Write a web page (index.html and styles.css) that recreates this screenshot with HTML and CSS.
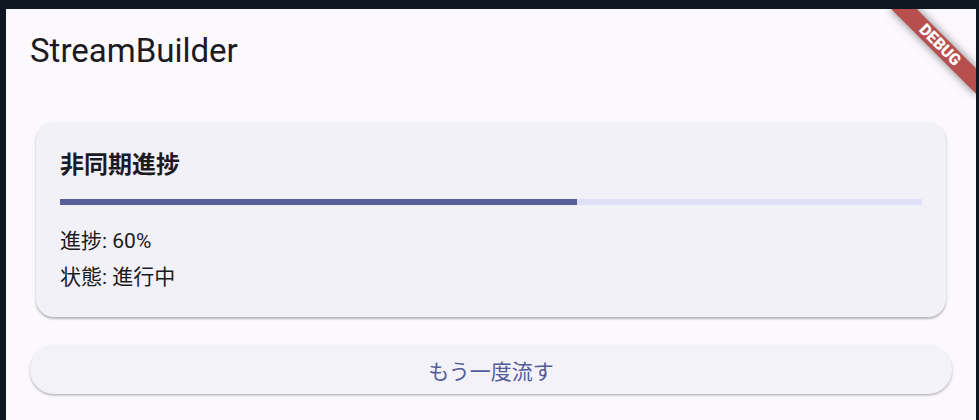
FILE: index.html
```html
<!DOCTYPE html>
<html lang="ja">
<head>
<meta charset="utf-8">
<title>StreamBuilder</title>
<link rel="stylesheet" href="styles.css">
</head>
<body>
<div class="window">
  <header class="app-bar">
    <h1 class="app-title">StreamBuilder</h1>
  </header>
  <main class="content">
    <section class="card">
      <h2 class="card-title">非同期進捗</h2>
      <div class="progress" role="progressbar" aria-valuenow="60" aria-valuemin="0" aria-valuemax="100">
        <div class="progress-fill" style="width: 60%"></div>
      </div>
      <div class="status">
        <p class="status-line">進捗: 60%</p>
        <p class="status-line">状態: 進行中</p>
      </div>
    </section>
    <button class="replay-button" type="button">もう一度流す</button>
  </main>
  <div class="debug-banner">DEBUG</div>
</div>
</body>
</html>
```
FILE: styles.css
```css
html, body {
  margin: 0;
  padding: 0;
  height: 100%;
}

body {
  background: #0e1621;
  overflow: hidden;
}

.window {
  position: relative;
  margin: 9px 3px 0 6px;
  height: 411px;
  background: #fbf8fe;
  overflow: hidden;
  font-family: Roboto, "Noto Sans CJK JP", sans-serif;
  color: #1b1b21;
}

.app-bar {
  height: 84px;
  display: flex;
  align-items: center;
  padding: 0 24px;
}

.app-title {
  margin: 0;
  font-size: 33px;
  font-weight: 400;
  line-height: 42px;
}

.content {
  padding: 24px;
  display: flex;
  flex-direction: column;
}

.card {
  margin: 6px;
  padding: 24px 24px 25px;
  border-radius: 18px;
  background: #f3f1f8;
  box-shadow: 0 1.5px 2px rgba(0, 0, 0, 0.22), 0 1px 4px rgba(0, 0, 0, 0.08);
}

.card-title {
  margin: 0;
  font-size: 24px;
  font-weight: 700;
  line-height: 36px;
}

.progress {
  margin-top: 16px;
  height: 6px;
  background: #e0e0f8;
}

.progress-fill {
  height: 100%;
  background: #565e9b;
}

.status {
  margin-top: 21px;
  display: flex;
  flex-direction: column;
  gap: 6px;
}

.status-line {
  margin: 0;
  font-size: 21px;
  line-height: 30px;
}

.replay-button {
  margin-top: 23px;
  height: 48px;
  width: 100%;
  border: none;
  border-radius: 24px;
  background: #f4f2f9;
  color: #535b97;
  font-family: Roboto, "Noto Sans CJK JP", sans-serif;
  font-size: 21px;
  font-weight: 400;
  box-shadow: 0 1.5px 2px rgba(0, 0, 0, 0.22), 0 1px 4px rgba(0, 0, 0, 0.08);
  cursor: pointer;
}

.debug-banner {
  position: absolute;
  top: 42px;
  right: -60px;
  width: 120px;
  height: 18px;
  transform-origin: 60px -42px;
  transform: rotate(45deg);
  background: #b84f4f;
  box-shadow: 0 0 10px rgba(0, 0, 0, 0.5);
  color: #ffffff;
  font-family: Roboto, sans-serif;
  font-size: 16px;
  font-weight: 900;
  line-height: 18px;
  text-align: center;
}
```
